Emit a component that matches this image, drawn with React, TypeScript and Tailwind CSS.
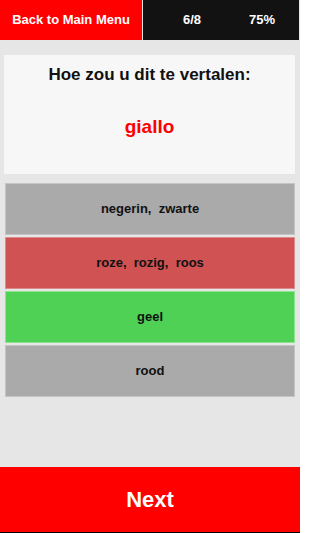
import type { FC } from 'react'

type Option = { label: string; tone: 'neutral' | 'wrong' | 'right' }

const options: Option[] = [
  { label: 'negerin,  zwarte', tone: 'neutral' },
  { label: 'roze,  rozig,  roos', tone: 'wrong' },
  { label: 'geel', tone: 'right' },
  { label: 'rood', tone: 'neutral' },
]

const toneClass: Record<Option['tone'], string> = {
  neutral: 'bg-[#aaaaaa] border-[#c4c4c4]',
  wrong: 'bg-[#d05252] border-[#dc8a8a]',
  right: 'bg-[#4fd155] border-[#8ee48f]',
}

const App: FC = () => {
  return (
    <div
      className="flex h-[533px] w-[300px] flex-col bg-[#e6e6e6]"
      style={{ fontFamily: '"Liberation Sans", Arial, sans-serif' }}
    >
      <header className="flex h-10 shrink-0">
        <button className="flex w-[142px] items-center justify-center bg-[#ff0000] text-[13px] font-bold text-white">
          Back to Main Menu
        </button>
        <div className="ml-[1px] mr-[1px] flex flex-1 items-center bg-[#121212] pl-[40px] text-[13px] font-bold text-white">
          <span>6/8</span>
          <span className="ml-[48px]">75%</span>
        </div>
      </header>

      <section className="ml-[4px] mr-[5px] mt-[15px] flex h-[119px] flex-col items-center bg-[#f7f7f7]">
        <h2 className="mt-[7px] text-[17px] font-bold text-[#111]">Hoe zou u dit te vertalen:</h2>
        <p className="mt-[25px] text-[19px] font-bold text-[#ff0000]">giallo</p>
      </section>

      <ul className="ml-[5px] mr-[5px] mt-[9px] flex flex-col gap-[2px]">
        {options.map((o) => (
          <li
            key={o.label}
            className={`flex h-[52px] items-center justify-center whitespace-pre border text-[13px] font-bold text-[#111] ${toneClass[o.tone]}`}
          >
            {o.label}
          </li>
        ))}
      </ul>

      <button className="mt-auto flex h-[66px] shrink-0 items-center justify-center border-b border-black bg-[#ff0000] text-[22px] font-bold text-white">
        Next
      </button>
    </div>
  )
}

export default App
